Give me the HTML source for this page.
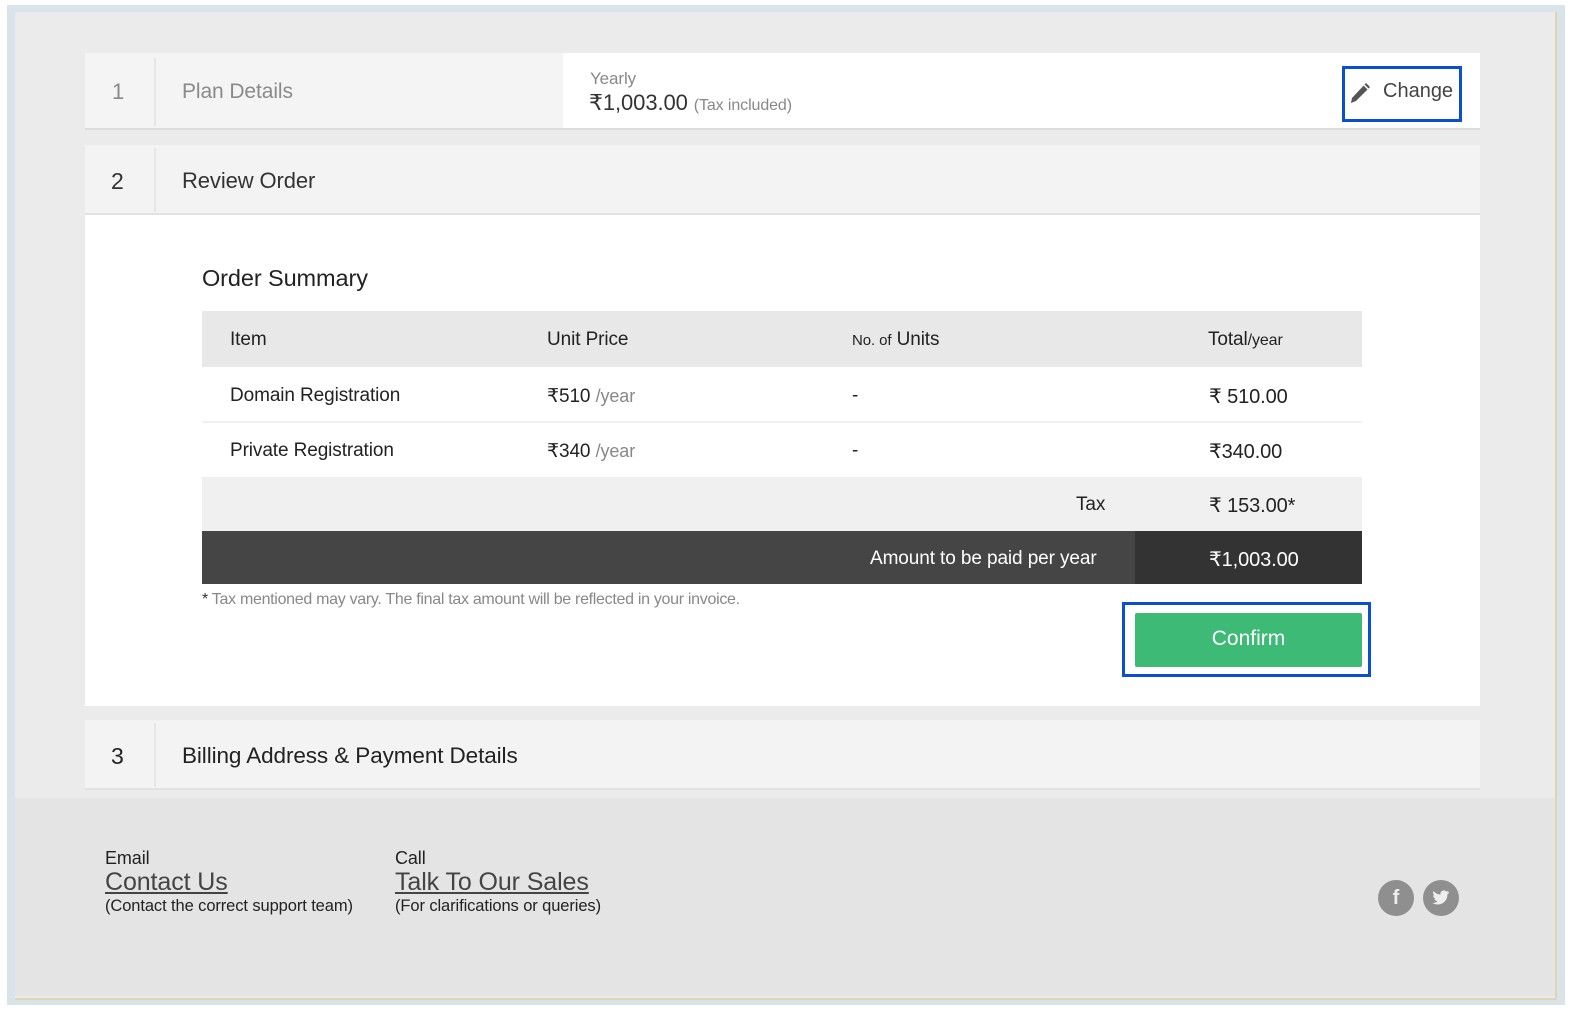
<!DOCTYPE html>
<html><head><meta charset="utf-8"><style>
*{margin:0;padding:0;box-sizing:border-box}
body{width:1582px;height:1016px;background:#fff;font-family:"Liberation Sans",sans-serif;position:relative;overflow:hidden;letter-spacing:-0.1px;color:#222}
.a{position:absolute}
</style></head><body>
<div class="a" style="left:7px;top:5px;width:1558px;height:1000px;background:#d9e3ea"></div>
<div class="a" style="left:15px;top:12px;width:1542px;height:988px;background:#e6c98a;opacity:.6"></div>
<div class="a" style="left:15px;top:12px;width:1540px;height:986px;background:#ebebeb"></div>
<div class="a" style="left:15px;top:798px;width:1540px;height:198px;background:#e4e4e4"></div>

<!-- row1 -->
<div class="a" style="left:85px;top:53px;width:1395px;height:77px;background:#fff;border-bottom:2px solid #dcdcdc"></div>
<div class="a" style="left:85px;top:53px;width:478px;height:75px;background:#f4f4f4"></div>
<div class="a" style="left:154px;top:58px;width:2px;height:68px;background:#e6e6e6"></div>
<div class="a" style="left:112px;top:79px;font-size:22px;color:#888">1</div>
<div class="a" style="left:182px;top:80px;font-size:21px;color:#8a8a8a">Plan Details</div>
<div class="a" style="left:590px;top:69px;font-size:17px;color:#888">Yearly</div>
<div class="a" style="left:589px;top:90px;font-size:22px;color:#333">₹1,003.00 <span style="font-size:16px;color:#888">(Tax included)</span></div>
<div class="a" style="left:1342px;top:66px;width:120px;height:56px;border:3px solid #0a4fd0"></div>
<svg class="a" style="left:1348px;top:80px" width="24" height="26" viewBox="0 0 24 26"><path d="M18 3l4 4L8 21l-5 2 1-5z" fill="#555"/><path d="M16 5l4 4" stroke="#fff" stroke-width="1.5"/></svg>
<div class="a" style="left:1383px;top:80px;font-size:20px;color:#444;letter-spacing:0">Change</div>

<!-- row2 -->
<div class="a" style="left:85px;top:145px;width:1395px;height:70px;background:#f3f3f3;border-bottom:2px solid #e2e2e2"></div>
<div class="a" style="left:154px;top:148px;width:2px;height:64px;background:#e6e6e6"></div>
<div class="a" style="left:111px;top:168px;font-size:23px;color:#333">2</div>
<div class="a" style="left:182px;top:168px;font-size:22px;color:#333">Review Order</div>
<div class="a" style="left:85px;top:215px;width:1395px;height:491px;background:#fff"></div>
<div class="a" style="left:202px;top:265px;font-size:23.5px;color:#222">Order Summary</div>

<!-- table -->
<div class="a" style="left:202px;top:311px;width:1160px;height:56px;background:#e8e8e8"></div>
<div class="a" style="left:230px;top:329px;font-size:19px">Item</div>
<div class="a" style="left:547px;top:329px;font-size:19px">Unit Price</div>
<div class="a" style="left:852px;top:329px;font-size:19px"><span style="font-size:15px">No. of</span> Units</div>
<div class="a" style="left:1208px;top:329px;font-size:19px">Total<span style="font-size:16px">/year</span></div>
<div class="a" style="left:202px;top:421px;width:1160px;height:2px;background:#f0f0f0"></div>
<div class="a" style="left:230px;top:385px;font-size:19px">Domain Registration</div>
<div class="a" style="left:547px;top:385px;font-size:19px">₹510 <span style="color:#888;font-size:18px">/year</span></div>
<div class="a" style="left:852px;top:385px;font-size:19px">-</div>
<div class="a" style="left:1209px;top:384px;font-size:20px">₹ 510.00</div>
<div class="a" style="left:230px;top:440px;font-size:19px">Private Registration</div>
<div class="a" style="left:547px;top:440px;font-size:19px">₹340 <span style="color:#888;font-size:18px">/year</span></div>
<div class="a" style="left:852px;top:440px;font-size:19px">-</div>
<div class="a" style="left:1209px;top:439px;font-size:20px">₹340.00</div>
<div class="a" style="left:202px;top:477px;width:1160px;height:54px;background:#f0f0f0"></div>
<div class="a" style="left:1076px;top:494px;font-size:19px">Tax</div>
<div class="a" style="left:1209px;top:493px;font-size:20px">₹ 153.00*</div>
<div class="a" style="left:202px;top:531px;width:1160px;height:53px;background:#454545"></div>
<div class="a" style="left:1135px;top:531px;width:227px;height:53px;background:#333"></div>
<div class="a" style="left:870px;top:548px;font-size:19px;color:#fff">Amount to be paid per year</div>
<div class="a" style="left:1209px;top:547px;font-size:20px;color:#fff">₹1,003.00</div>
<div class="a" style="left:202px;top:591px;font-size:16px;color:#888;letter-spacing:-0.3px"><span style="color:#333">*</span> Tax mentioned may vary. The final tax amount will be reflected in your invoice.</div>
<div class="a" style="left:1122px;top:602px;width:249px;height:75px;border:3px solid #0a4fd0"></div>
<div class="a" style="left:1135px;top:613px;width:227px;height:54px;background:#3dba76;border-radius:2px;color:#fff;font-size:21px;text-align:center;line-height:52px;letter-spacing:0">Confirm</div>

<!-- row3 -->
<div class="a" style="left:85px;top:720px;width:1395px;height:70px;background:#f3f3f3;border-bottom:2px solid #e2e2e2"></div>
<div class="a" style="left:154px;top:723px;width:2px;height:64px;background:#e6e6e6"></div>
<div class="a" style="left:111px;top:743px;font-size:23px;color:#222">3</div>
<div class="a" style="left:182px;top:743px;font-size:22.5px;color:#222">Billing Address &amp; Payment Details</div>

<!-- footer -->
<div class="a" style="left:105px;top:848px;font-size:18px;color:#222">Email</div>
<div class="a" style="left:105px;top:868px;font-size:25px;color:#444;text-decoration:underline">Contact Us</div>
<div class="a" style="left:105px;top:897px;font-size:16.5px;color:#222">(Contact the correct support team)</div>
<div class="a" style="left:395px;top:848px;font-size:18px;color:#222">Call</div>
<div class="a" style="left:395px;top:868px;font-size:25px;color:#444;text-decoration:underline">Talk To Our Sales</div>
<div class="a" style="left:395px;top:897px;font-size:16.5px;color:#222">(For clarifications or queries)</div>
<div class="a" style="left:1378px;top:880px;width:36px;height:36px;border-radius:50%;background:#8f8f8f;color:#eee;font-weight:bold;font-size:20px;text-align:center;line-height:37px;letter-spacing:0">f</div>
<svg class="a" style="left:1423px;top:880px" width="36" height="36" viewBox="0 0 36 36"><circle cx="18" cy="18" r="18" fill="#8f8f8f"/><path d="M26 12c-.7.3-1.3.5-2 .6.7-.4 1.2-1.1 1.5-1.9-.7.4-1.4.7-2.2.8a3.4 3.4 0 0 0-5.8 3.1c-2.8-.1-5.3-1.5-7-3.6-.9 1.6-.4 3.6 1.1 4.6-.6 0-1.1-.2-1.5-.4 0 1.7 1.2 3.1 2.7 3.4-.5.1-1 .2-1.5.1.4 1.4 1.7 2.3 3.2 2.4A6.9 6.9 0 0 1 9.5 23c1.5 1 3.3 1.5 5.2 1.5 6.3 0 9.7-5.2 9.7-9.7v-.4c.6-.5 1.2-1 1.6-1.6z" fill="#eee"/></svg>
</body></html>
